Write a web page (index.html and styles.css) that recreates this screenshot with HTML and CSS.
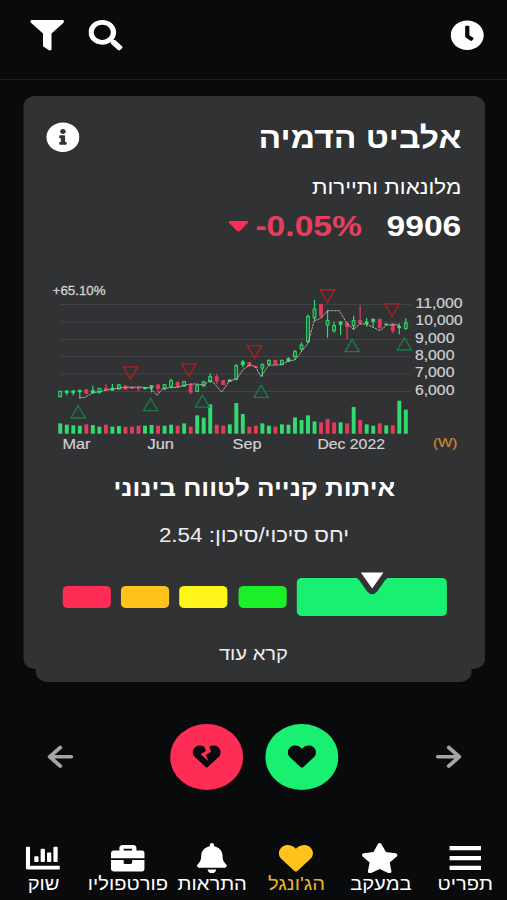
FILE: index.html
```html
<!DOCTYPE html>
<html lang="he" dir="rtl">
<head>
<meta charset="utf-8">
<title>אלביט הדמיה</title>
<link rel="stylesheet" href="styles.css">
</head>
<body>
<div class="screen">
  <header class="topbar">
    <svg class="icon" viewBox="0 0 512 512"><path d="M256,8C119,8,8,119,8,256S119,504,256,504,504,393,504,256,393,8,256,8Zm92.49,313h0l-20,25a16,16,0,0,1-22.49,2.5h0l-67-49.72a40,40,0,0,1-15-31.23V112a16,16,0,0,1,16-16h32a16,16,0,0,1,16,16V256l58,42.5A16,16,0,0,1,348.49,321Z"/></svg>
    <div class="tools">
      <svg class="icon" viewBox="0 0 512 512"><path d="M505 442.7L405.3 343c-4.5-4.5-10.6-7-17-7H372c27.6-35.3 44-79.7 44-128C416 93.1 322.9 0 208 0S0 93.1 0 208s93.1 208 208 208c48.3 0 92.7-16.4 128-44v16.3c0 6.4 2.5 12.5 7 17l99.7 99.7c9.4 9.4 24.6 9.4 33.9 0l28.3-28.3c9.4-9.4 9.4-24.6.1-34zM208 336c-70.7 0-128-57.2-128-128 0-70.7 57.2-128 128-128 70.7 0 128 57.2 128 128 0 70.7-57.2 128-128 128z"/></svg>
      <svg class="icon" viewBox="0 0 512 512"><path d="M487.976 0H24.028C2.71 0-8.047 25.866 7.058 40.971L192 225.941V432c0 7.831 3.821 15.17 10.237 19.662l80 55.98C298.02 518.69 320 507.493 320 487.98V225.941l184.947-184.97C520.021 25.896 509.338 0 487.976 0z"/></svg>
    </div>
  </header>

  <main class="deck">
    <article class="card">
      <div class="card-head">
        <h1 class="name">אלביט הדמיה</h1>
        <svg class="icon" viewBox="0 0 512 512"><path d="M256 8C119.043 8 8 119.083 8 256c0 136.997 111.043 248 248 248s248-111.003 248-248C504 119.083 392.957 8 256 8zm0 110c23.196 0 42 18.804 42 42s-18.804 42-42 42-42-18.804-42-42 18.804-42 42-42zm56 254c0 6.627-5.373 12-12 12h-88c-6.627 0-12-5.373-12-12v-24c0-6.627 5.373-12 12-12h12v-64h-12c-6.627 0-12-5.373-12-12v-24c0-6.627 5.373-12 12-12h64c6.627 0 12 5.373 12 12v100h12c6.627 0 12 5.373 12 12v24z"/></svg>
      </div>
      <p class="sector">מלונאות ותיירות</p>
      <div class="quote">
        <span class="price">9906</span>
        <span class="change" dir="ltr"><svg class="caret" viewBox="0 0 18 11"><path d="M1 0h16q1.600.4 .6 1.700L10.300 10Q9 11 7.700 10L.4 1.700Q-.6.4 1 0z"/></svg><span>-0.05%</span></span>
      </div>
      <svg class="chart" id="chart" viewBox="46 280 420 180" preserveAspectRatio="none" direction="ltr"></svg>
      <h2 class="signal">איתות קנייה לטווח בינוני</h2>
      <p class="ratio">יחס סיכוי/סיכון: 2.54</p>
      <div class="scale">
        <i class="step red"></i><i class="step amber"></i><i class="step yellow"></i><i class="step green"></i>
        <i class="step active"><svg class="marker" viewBox="0 0 32 25" preserveAspectRatio="none"><path class="notch" d="M1 5H31V6.500Q29 7 27 11L21 19.500Q16 25 11 19.500L5 11Q3 7 1 6.500z"/><path class="tip" d="M4.700 .5H27.300L16 16.500z"/></svg></i>
      </div>
      <a class="more">קרא עוד</a>
    </article>
    <div class="under"></div>
  </main>

  <div class="actions" dir="ltr">
    <svg class="arrow" viewBox="0 0 24 24"><path d="M22 12H3M12 2.500L2.500 12L12 21.500"/></svg>
    <div class="votes">
      <span class="vote no"><svg viewBox="0 0 512 512"><path d="M473.7 73.8l-2.4-2.5c-46-47-118-51.7-169.6-14.8L336 159.9l-96 64 48 128-144-144 96-64-28.6-86.5C159.7 19.6 87 24 40.7 71.4l-2.4 2.4C-10.4 123.6-12.5 202.9 31 256l212.1 218.6c7.1 7.3 18.6 7.3 25.7 0L481 255.9c43.5-53 41.4-132.3-7.3-182.1z"/></svg></span>
      <span class="vote yes"><svg viewBox="0 0 512 512"><path d="M462.3 62.6C407.5 15.9 326 24.3 275.7 76.2L256 96.5l-19.7-20.3C186.1 24.3 104.5 15.9 49.7 62.6c-62.8 53.6-66.1 149.8-9.9 207.9l193.5 199.8c12.5 12.9 32.8 12.9 45.3 0l193.5-199.8c56.3-58.1 53-154.3-9.8-207.9z"/></svg></span>
    </div>
    <svg class="arrow" viewBox="0 0 24 24"><path d="M2 12H21M12 2.500L21.500 12L12 21.500"/></svg>
  </div>

  <nav class="tabs">
    <a class="tab"><svg class="icon" viewBox="0 0 512 512"><path d="M24 52H496V124H24zM24 219H496V291H24zM24 384H496V456H24z"/></svg><span>תפריט</span></a>
    <a class="tab"><svg class="icon star" viewBox="0 0 576 512"><path d="M259.3 17.8L194 150.2 47.9 171.5c-26.2 3.8-36.7 36.1-17.7 54.6l105.7 103-25 145.5c-4.5 26.3 23.2 46 46.4 33.7L288 439.6l130.7 68.7c23.2 12.2 50.9-7.4 46.4-33.7l-25-145.5 105.7-103c19-18.5 8.5-50.8-17.7-54.6L382 150.2 316.7 17.8c-11.7-23.6-45.6-23.9-57.4 0z"/></svg><span>במעקב</span></a>
    <a class="tab current"><svg class="icon" viewBox="0 0 512 512"><path d="M462.3 62.6C407.5 15.9 326 24.3 275.7 76.2L256 96.5l-19.7-20.3C186.1 24.3 104.5 15.9 49.7 62.6c-62.8 53.6-66.1 149.8-9.9 207.9l193.5 199.8c12.5 12.9 32.8 12.9 45.3 0l193.5-199.8c56.3-58.1 53-154.3-9.8-207.9z"/></svg><span>הג'ונגל</span></a>
    <a class="tab"><svg class="icon" viewBox="-32 0 512 512"><path d="M224 512c35.32 0 63.97-28.65 63.97-64H160.03c0 35.35 28.65 64 63.97 64zm215.39-149.71c-19.32-20.76-55.47-51.99-55.47-154.29 0-77.7-54.48-139.9-127.94-155.16V32c0-17.67-14.32-32-31.98-32s-31.98 14.33-31.98 32v20.84C118.56 68.1 64.08 130.3 64.08 208c0 102.3-36.15 133.53-55.47 154.29-6 6.45-8.66 14.16-8.61 21.71.11 16.4 12.98 32 32.1 32h383.8c19.12 0 32-15.6 32.1-32 .05-7.55-2.61-15.27-8.61-21.71z"/></svg><span>התראות</span></a>
    <a class="tab"><svg class="icon" viewBox="0 0 512 512"><path d="M320 336c0 8.84-7.16 16-16 16h-96c-8.84 0-16-7.16-16-16v-48H0v144c0 25.6 22.4 48 48 48h416c25.6 0 48-22.4 48-48V288H320v48zm144-208h-80V80c0-25.6-22.4-48-48-48H176c-25.6 0-48 22.4-48 48v48H48c-25.6 0-48 22.4-48 48v80h512v-80c0-25.6-22.4-48-48-48zm-144 0H192V96h128v32z"/></svg><span>פורטפוליו</span></a>
    <a class="tab"><svg class="icon" viewBox="0 0 512 512"><path d="M332.8 320h38.4c6.4 0 12.8-6.4 12.8-12.8V172.8c0-6.4-6.4-12.8-12.8-12.8h-38.4c-6.4 0-12.8 6.4-12.8 12.8v134.4c0 6.4 6.4 12.8 12.8 12.8zm96 0h38.4c6.4 0 12.8-6.4 12.8-12.8V76.8c0-6.4-6.4-12.8-12.8-12.8h-38.4c-6.4 0-12.8 6.4-12.8 12.8v230.4c0 6.4 6.4 12.8 12.8 12.8zm-288 0h38.4c6.4 0 12.8-6.4 12.8-12.8v-70.4c0-6.4-6.4-12.8-12.8-12.8h-38.4c-6.4 0-12.8 6.4-12.8 12.8v70.4c0 6.4 6.4 12.8 12.8 12.8zm96 0h38.4c6.4 0 12.8-6.4 12.8-12.8V108.8c0-6.4-6.4-12.8-12.8-12.8h-38.4c-6.4 0-12.8 6.4-12.8 12.8v198.4c0 6.4 6.4 12.8 12.8 12.8zM496 384H64V80c0-8.84-7.16-16-16-16H16C7.16 64 0 71.16 0 80v336c0 17.67 14.33 32 32 32h464c8.84 0 16-7.16 16-16v-32c0-8.84-7.16-16-16-16z"/></svg><span>שוק</span></a>
  </nav>
</div>
<script src="chart.js"></script>
</body>
</html>
```

FILE: styles.css
```css
* { box-sizing: border-box; margin: 0; padding: 0; }

html, body { width: 507px; height: 900px; overflow: hidden; background: #090a0c; }

body { color: #fff; font-family: "Liberation Sans", "Open Sans", sans-serif; direction: ltr; }

/* The layout is drawn at a narrower width and widened as a whole. */
.screen {
  width: 452.68px;
  height: 900px;
  display: flex;
  flex-direction: column;
  direction: rtl;
  transform: scaleX(1.12);
  transform-origin: 0 0;
}

.icon { width: 30.4px; height: 30.4px; fill: currentColor; display: block; flex: none; }

.topbar {
  height: 80px;
  padding: 20.3px 20px 0 26.8px;
  display: flex;
  justify-content: space-between;
  align-items: flex-start;
  border-bottom: 1px solid #1b1c1e;
}
.tools { display: flex; gap: 22.2px; }

.deck { padding: 15.5px 20px 0 20.5px; }

.card {
  height: 573.5px;
  padding: 26px 20.8px 0 20.2px;
  border-radius: 10px;
  background: #313234;
}
.card-head { height: 50px; display: flex; justify-content: space-between; align-items: flex-start; }
.card-head .icon { margin-top: .8px; }
.name { font-size: 30px; line-height: 34px; font-weight: 700; margin-top: -1px; }
.sector { font-size: 20px; line-height: 30px; height: 34px; }

.quote { display: flex; gap: 22px; font-size: 30px; font-weight: 700; line-height: 40px; height: 40px; }
.change { display: flex; align-items: center; gap: 6.5px; color: #e63f5e; }
.caret { width: 17.8px; height: 11px; margin-top: 2px; fill: #ff2d55; }

/* Starts at x = 46 on screen, so the drawing's units are screen pixels. */
.chart { display: block; width: 375px; height: 180px; margin: 34.5px -4.4px 0 0; }
.grid { stroke: #424346; stroke-width: 1; }
.label { fill: #d0d1d2; font-size: 14.5px; stroke: #d0d1d2; stroke-width: .2; }
.gain { fill: #d0d1d2; font-size: 12px; stroke: #d0d1d2; stroke-width: .3; }
.week { fill: #cf8a2b; font-size: 13px; stroke: #cf8a2b; stroke-width: .2; }
.up { fill: #30dc70; stroke: #30dc70; }
.down { fill: #e23c5c; stroke: #e23c5c; }
.hollow { fill: #24603d; }
.vol { stroke: none; }
.average { fill: none; stroke: #c5c0b2; stroke-width: .9; stroke-dasharray: 2.5 .8; }
.sell { fill: none; stroke: #b51d24; stroke-width: 1.3; }
.buy { fill: none; stroke: #167f45; stroke-width: 1.3; }

.signal { margin: 9.5px -.8px 0 .8px; text-align: center; font-size: 23.2px; line-height: 36px; font-weight: 700; }
.ratio { margin: 14px -.5px 0 .5px; text-align: center; font-size: 20px; line-height: 30px; color: #eee; }

.scale { direction: ltr; height: 38px; margin-top: 28.5px; padding: 0 0 0 15.1px; display: flex; align-items: center; gap: 9.3px; }
.step { display: block; width: 43px; height: 22px; border-radius: 4.5px; flex: none; }
.red { background: #ff2d55; }
.amber { background: #ffc31c; }
.yellow { background: #fff51a; }
.green { background: #1bef29; }
.active { position: relative; width: 133.6px; height: 38px; background: #19f072; }
.marker { position: absolute; left: 52.6px; top: -6.5px; width: 28.6px; height: 25px; }
.notch { fill: #313234; }
.tip { fill: #fff; }

.more { display: block; margin-top: 22.5px; text-align: center; font-size: 18px; line-height: 30px; color: #eee; }

.under { height: 13px; margin: 0 11.5px; background: #313234; border-radius: 0 0 10px 10px; }

.actions { height: 66px; margin-top: 41.8px; padding: 0 40.5px 0 42px; display: flex; align-items: center; justify-content: space-between; }
.arrow { width: 23.5px; height: 23.5px; fill: none; stroke: #a5a5a6; stroke-width: 3.7; stroke-linecap: round; stroke-linejoin: round; }
.votes { display: flex; gap: 19.6px; }
.vote { width: 65.6px; height: 65.6px; border-radius: 50%; display: flex; align-items: center; justify-content: center; }
.vote svg { width: 25.2px; height: 25.2px; fill: #090a0c; }
.no { background: #ff2d55; }
.yes { background: #19f072; }

.tabs { margin-top: 53.2px; display: grid; grid-template-columns: repeat(6, 1fr); padding-left: 1px; }
.tab { display: flex; flex-direction: column; align-items: center; font-size: 18px; line-height: 22px; white-space: nowrap; }
.tab span { margin-left: .6px; }
.star { width: 34px; margin-right: 2px; }
.current .icon { color: #ffc31c; }
.current span { color: #e5b530; }
```

FILE: chart.js
```js
const NS = "http://www.w3.org/2000/svg";
const chart = document.getElementById("chart");

function add(tag, attrs, text) {
  const el = document.createElementNS(NS, tag);
  for (const k in attrs) el.setAttribute(k, attrs[k]);
  if (text) el.textContent = text;
  chart.appendChild(el);
}

// Each week: [direction, high, body top, body bottom, low, volume height], in thirds of a pixel.
const weeks = [
  ["u",332,334,350,352,31],["u",330,333,338,346,27],["u",330,333,338,346,25],["u",329,331,335,354,24],
  ["d",328,329,340,342,28],["u",317,332,338,340,26],["u",325,325,338,340,21],["d",312,325,330,332,27],
  ["u",312,325,330,332,21],["u",312,315,327,328,23],["d",316,318,327,329,21],["d",321,322,325,326,21],
  ["d",320,322,325,333,24],["u",322,323,326,328,24],["u",315,317,324,337,26],["d",313,315,325,340,24],
  ["u",312,314,327,329,24],["u",296,302,320,324,27],["d",305,308,321,323,24],["u",303,305,318,320,31],
  ["d",312,314,336,342,21],["u",313,316,334,335,55],["u",302,306,318,320,48],["u",280,290,305,308,88],
  ["d",283,290,303,312,27],["d",300,302,313,315,24],["u",298,300,304,306,28],["u",252,257,297,301,92],
  ["u",240,246,254,262,59],["d",246,248,258,260,21],["d",258,259,262,263,24],["u",250,254,264,290,31],
  ["u",238,242,252,258,24],["d",240,241,252,254,21],["u",238,242,253,256,28],["u",232,236,244,246,27],
  ["u",210,215,230,240,49],["u",187,195,207,213,41],["u",103,110,185,190,55],["u",60,87,113,122,37],
  ["d",72,74,108,115,34],["u",90,122,135,173,44],["u",125,137,152,158,34],["u",123,126,133,165,34],
  ["d",125,130,140,178,31],["u",107,122,137,150,80],["d",76,122,130,132,41],["u",114,126,130,140,28],
  ["u",115,118,124,140,24],["d",116,118,143,146,31],["u",131,132,134,135,25],["d",130,132,152,160,25],
  ["u",130,140,143,163,99],["u",115,129,145,150,72]
];
// Volume colours follow their own list of falling weeks.
const redVolume = [4,7,10,11,12,15,18,20,24,25,29,30,33,40,41,42,44,46,49,51];

[304.5,322,339.5,356.5,374,391.5].forEach(y => add("line", {x1:60, x2:411, y1:y, y2:y, class:"grid"}));

weeks.forEach(([dir, hi, top, bottom, lo, vol], i) => {
  const x = 60.3 + i * 6.52;
  const y = v => 280 + v / 3;
  const cls = dir === "u" ? "up" : "down";
  add("line", {x1:x, x2:x, y1:y(hi), y2:y(lo), class:cls, "stroke-width":1.2});
  const tall = bottom - top > 9 && dir === "u";
  add("rect", {x:x-1.4, y:y(top), width:2.8, height:(bottom-top)/3, class:cls + (tall ? " hollow" : ""), "stroke-width":1});
  add("rect", {x:x-1.9, y:433.7-vol/3, width:3.9, height:vol/3, class:(redVolume.includes(i) ? "down" : "up") + " vol"});
});

const average = [[79.3,398],[85,397.3],[93.3,392.7],[112.3,389],[125.3,387.3],[140,387],[150,388],[157.3,395.3],
  [162.7,388.3],[177,387.3],[190,384],[196.7,384],[204,385],[210.3,380],[215,384],[221.7,392.3],[229.3,381],[236.7,379],[243.3,369.3],
  [250,364.7],[255.7,366.7],[261,376.7],[268.7,365.3],[282.3,364.7],[288.7,360.7],[295,360],[308,343.3],
  [314.3,320.7],[321,318.3],[327.7,310.7],[339.3,310.7],[347.3,324],[353.7,329.3],[360,324],[366.3,324],
  [380.3,330.7],[386.7,325],[398.3,324.7],[399,327.7]];
add("polyline", {points: average.join(" "), class:"average"});

[[130.5,366.8],[189,363.8],[254.7,345.8],[327.5,290],[392.2,303.8]].forEach(([x, y]) =>
  add("path", {d:`M${x-7.2} ${y}h14.4l-7.2 12.5z`, class:"sell"}));
[[78.3,405.8],[150.7,398.5],[202.5,395],[261.2,385.2],[352.3,339.4],[404.5,337.8]].forEach(([x, y]) =>
  add("path", {d:`M${x} ${y}l7.2 12.2h-14.4z`, class:"buy"}));

function label(x, y, width, text, cls = "label") {
  add("text", {x, y, textLength:width, lengthAdjust:"spacingAndGlyphs", class:cls}, text);
}
label(52.7, 295.3, 53, "+65.10%", "gain");
label(415.7, 307.8, 47, "11,000");
label(415.7, 325.2, 47, "10,000");
label(415, 343.2, 39.5, "9,000");
label(415, 360, 39.5, "8,000");
label(415, 377, 39.5, "7,000");
label(415, 395.3, 39.5, "6,000");
label(62.5, 449, 28, "Mar");
label(147.5, 449, 26.5, "Jun");
label(232.7, 449, 29, "Sep");
label(317.5, 449, 67.5, "Dec 2022");
label(433, 446.5, 24.5, "(W)", "week");
```
